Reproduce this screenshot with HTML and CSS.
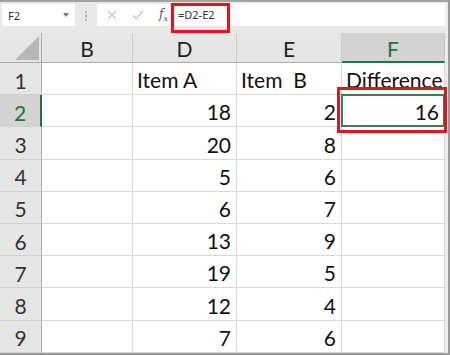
FILE: index.html
```html
<!DOCTYPE html>
<html lang="en">
<head>
  <meta charset="UTF-8" />
  <title>Difference</title>
  <link rel="stylesheet" href="styles.css">
</head>
<body>
  <div class="excel">
    <div class="formula-bar">
      <div class="name-box">
        <span>F2</span>
        <svg class="caret" width="6" height="4" viewBox="0 0 6 4"><path d="M0 0h6L3 4z" fill="#7a7a7a"/></svg>
      </div>
      <div class="grip"><i></i><i></i><i></i></div>
      <div class="fx-box">
        <svg width="10" height="10" viewBox="0 0 10 10"><path d="M1 1l8 8M9 1l-8 8" stroke="#c4c4c4" stroke-width="1.3" fill="none"/></svg>
        <svg width="12" height="10" viewBox="0 0 12 10"><path d="M1 5.5l3.2 3.2L11 1" stroke="#c4c4c4" stroke-width="1.3" fill="none"/></svg>
        <span class="fx">f<sub>x</sub></span>
      </div>
      <div class="formula-input">
        <span class="formula-text">=D2-E2</span>
        <span class="mark-formula"></span>
      </div>
    </div>

    <div class="sheet">
      <div class="corner"><span class="tri"></span></div>
      <div class="col-head">B</div>
      <div class="col-head">D</div>
      <div class="col-head">E</div>
      <div class="col-head sel">F</div>

      <div class="row-head">1</div>
      <div class="cell"></div>
      <div class="cell">Item A</div>
      <div class="cell">Item&nbsp; B</div>
      <div class="cell">Difference</div>

      <div class="row-head sel">2</div>
      <div class="cell"></div>
      <div class="cell num">18</div>
      <div class="cell num">2</div>
      <div class="cell num active">16</div>

      <div class="row-head">3</div>
      <div class="cell"></div>
      <div class="cell num">20</div>
      <div class="cell num">8</div>
      <div class="cell"></div>

      <div class="row-head">4</div>
      <div class="cell"></div>
      <div class="cell num">5</div>
      <div class="cell num">6</div>
      <div class="cell"></div>

      <div class="row-head">5</div>
      <div class="cell"></div>
      <div class="cell num">6</div>
      <div class="cell num">7</div>
      <div class="cell"></div>

      <div class="row-head">6</div>
      <div class="cell"></div>
      <div class="cell num">13</div>
      <div class="cell num">9</div>
      <div class="cell"></div>

      <div class="row-head">7</div>
      <div class="cell"></div>
      <div class="cell num">19</div>
      <div class="cell num">5</div>
      <div class="cell"></div>

      <div class="row-head">8</div>
      <div class="cell"></div>
      <div class="cell num">12</div>
      <div class="cell num">4</div>
      <div class="cell"></div>

      <div class="row-head">9</div>
      <div class="cell"></div>
      <div class="cell num">7</div>
      <div class="cell num">6</div>
      <div class="cell"></div>
    </div>
  </div>
</body>
</html>
```

FILE: styles.css
```css
* { box-sizing: border-box; }
body {
  margin: 0;
  background: #fff;
  font-family: Lato, "Open Sans", sans-serif;
}
.excel {
  width: 450px;
  height: 355px;
  border-top: 2px solid #a3a3a3;
  border-right: 2px solid #9a9a9a;
  border-bottom: 2px solid #9a9a9a;
  padding-right: 3px;
  background: #ececec;
  overflow: hidden;
}

/* formula bar */
.formula-bar {
  height: 31px;
  display: flex;
  align-items: flex-start;
  background: #e9e9e9;
  font-family: "Noto Sans", "Open Sans", sans-serif;
  font-size: 11px;
  color: #333;
}
.name-box {
  width: 73px;
  height: 22px;
  margin: 2px 0 0 2px;
  background: #fff;
  display: flex;
  align-items: center;
  justify-content: space-between;
  padding: 0 6px 0 6px;
}
.grip {
  width: 22px;
  padding-top: 9px;
  display: flex;
  flex-direction: column;
  align-items: center;
  gap: 2px;
}
.grip i {
  width: 2px;
  height: 2px;
  background: #b5b5b5;
}
.fx-box {
  width: 73px;
  height: 22px;
  margin-top: 2px;
  background: #fff;
  display: flex;
  align-items: center;
  gap: 15px;
  padding-left: 10px;
}
.fx {
  font-family: "DejaVu Serif", serif;
  font-style: italic;
  font-size: 12px;
  color: #555;
}
.fx sub { font-size: 8px; }
.formula-input {
  position: relative;
  flex: 1;
  height: 23px;
  margin: 1px 0 0 2px;
  background: #fff;
  display: flex;
  align-items: center;
  padding-left: 6px;
}
.mark-formula {
  position: absolute;
  left: -1px;
  top: 0;
  width: 59px;
  height: 30px;
  border: 3px solid #e0161e;
}

/* sheet grid */
.sheet {
  display: grid;
  grid-template-columns: 42px 91px 104px 105px 103px;
  grid-template-rows: 30px repeat(9, 32.2px);
  background: #fff;
  font-size: 21px;
  color: #111;
}
.corner, .col-head, .row-head {
  background: #e6e6e6;
}
.corner {
  position: relative;
  border-right: 1px solid #ababab;
  border-bottom: 1px solid #ababab;
}
.tri {
  position: absolute;
  right: 2px;
  bottom: 2px;
  width: 0;
  height: 0;
  border-left: 24px solid transparent;
  border-bottom: 24px solid #b7b7b7;
}
.col-head {
  display: flex;
  align-items: center;
  justify-content: center;
  border-right: 1px solid #c9c9c9;
  border-bottom: 1px solid #ababab;
  padding-top: 2px;
  color: #222;
}
.row-head {
  display: flex;
  align-items: center;
  justify-content: center;
  border-right: 1px solid #ababab;
  border-bottom: 1px solid #d0d0d0;
  padding-top: 3px;
  color: #333;
}
.col-head.sel {
  background: #d3d3d3;
  color: #217346;
  border-bottom: 2px solid #217346;
}
.row-head.sel {
  background: #d3d3d3;
  color: #217346;
  border-right: 2px solid #217346;
}
.cell {
  display: flex;
  align-items: flex-end;
  padding: 0 5px 2px 4px;
  border-right: 1px solid #d9d9d9;
  border-bottom: 1px solid #d9d9d9;
  white-space: nowrap;
}
.num { justify-content: flex-end; }
.cell.active {
  position: relative;
  z-index: 2;
}
.cell.active::before {
  content: "";
  position: absolute;
  left: -1px;
  top: -1px;
  right: -1px;
  bottom: -1px;
  border: 2px solid #3f7a55;
}
.cell.active::after {
  content: "";
  position: absolute;
  left: -5px;
  top: -8px;
  right: -3px;
  bottom: -7px;
  border: 3px solid #e0161e;
}
```
